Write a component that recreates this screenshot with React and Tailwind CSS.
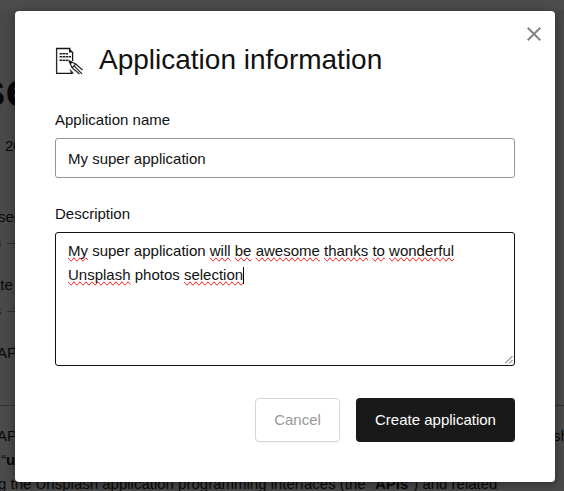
import React from 'react';

function Misspelled({ children }) {
  return <span className="[text-decoration-line:spelling-error]">{children}</span>;
}

function PageBehind() {
  return (
    <div className="h-[491px] w-[564px] overflow-hidden bg-[#4a4a4a] text-[15px] leading-6 whitespace-nowrap text-[#080808]">
      <div className="h-[10px] bg-[#4c4c4c]" />
      <div className="h-[396px] border-b border-[#313131] bg-[#494949]">
        <div className="h-[124px] pt-[50px]">
          <div className="-ml-[20px] text-[46px] leading-[60px] font-bold">se</div>
        </div>
        <div className="h-[71px] pl-[5px]">2020</div>
        <div className="-ml-[2px] h-[26px]">see</div>
        <div className="-ml-[5px] flex h-[42px] items-start gap-[5px] text-[13px] text-[#292929]">
          <span>s</span><span className="mt-[12px] h-px w-10 bg-[#2c2c2c]" />
        </div>
        <div className="-ml-[8px] h-[26px]">ate</div>
        <div className="-ml-[5px] flex h-[42px] items-start gap-[5px] text-[13px] text-[#292929]">
          <span>s</span><span className="mt-[12px] h-px w-10 bg-[#2c2c2c]" />
        </div>
        <div className="-ml-[3px]">API</div>
      </div>
      <div className="pt-[18px]">
        <div className="-ml-[3px] flex"><span className="w-[556px] shrink-0">API</span><span>sh</span></div>
        <div className="pl-px">“<b>u</b></div>
        <div className="-ml-[2px]">g the Unsplash application programming interfaces (the “<b>APIs</b>”) and related</div>
      </div>
    </div>
  );
}

function DocumentIcon() {
  return (
    <svg width="28" height="28" viewBox="0 0 28 28" fill="none">
      <path d="M2.5 1v26" stroke="#a9d3f2" strokeWidth="1" />
      <path d="M1.5 1v26" stroke="#3a2416" strokeWidth="1.1" />
      <path d="M1 1.5h14.5M1 26.4h16.5M17.6 5v9" stroke="#171717" strokeWidth="1.3" />
      <path d="M14 1l4.5 4.5h-4.5z" fill="#171717" />
      <path d="M4.5 6.7h8.5M4.5 9.7h12M4.5 13.2h9" stroke="#222" strokeWidth="1.4" strokeDasharray="3 .5 2 .5" />
      <path d="M14 13.7l3 7 7.5 6.3M14 13.7l6.8 3.3 6.7 6M17.2 20.6l3.6-3.6M19 18.8l8 8" stroke="#262220" strokeWidth="1.2" />
      <path d="M13.7 13.3l4 1.9-2.3 2.3z" fill="#111" />
      <path d="M14.5 21.5l4.5 5h-3z" fill="#252525" />
    </svg>
  );
}

export default function App() {
  return (
    <div className="relative h-[491px] w-[564px] overflow-hidden font-['Liberation_Sans',Arial,sans-serif] text-[#111]">
      <PageBehind />
      <div className="absolute top-[11px] left-[15px] h-[471px] w-[540px] rounded-[4px] bg-white px-10 text-[15px] leading-6 shadow-[0_2px_10px_rgba(0,0,0,0.4)]">
        <button className="absolute top-4 right-[14px]" aria-label="Close">
          <svg width="14" height="14" viewBox="0 0 14 14" stroke="#858585" strokeWidth="2">
            <path d="M.7 .7l12.6 12.6M13.3 .7L.7 13.3" />
          </svg>
        </button>
        <div className="flex h-[97px] items-start pt-[32px]">
          <div className="mt-1 w-11"><DocumentIcon /></div>
          <h1 className="text-[28px] leading-[34px]">Application information</h1>
        </div>
        <label className="block h-[30px]">Application name</label>
        <div className="h-10 rounded-[3px] border border-[#949494] px-3 py-[8px] leading-[24px]">My super application</div>
        <label className="mt-6 block h-[30px]">Description</label>
        <div className="relative h-[134px] rounded-[3px] border border-[#111] px-3 pt-[6px]">
          <div>
            <Misspelled>My</Misspelled> super application <Misspelled>will</Misspelled> <Misspelled>be</Misspelled> <Misspelled>awesome</Misspelled> <Misspelled>thanks</Misspelled> <Misspelled>to</Misspelled> <Misspelled>wonderful</Misspelled>
          </div>
          <div className="flex items-center whitespace-pre">
            <Misspelled>Unsplash</Misspelled> photos <Misspelled>selection</Misspelled><span className="h-[17px] w-px bg-black" />
          </div>
          <svg className="absolute right-px bottom-px" width="8" height="8" viewBox="0 0 8 8" stroke="#555">
            <path d="M0 7.5L7.5 0M4 7.5L7.5 4" />
          </svg>
        </div>
        <div className="mt-8 flex justify-end gap-4">
          <button className="h-11 w-[85px] rounded-[4px] border border-[#d5d5d5] text-[#999] shadow-[0_1px_1px_rgba(0,0,0,0.05)]">Cancel</button>
          <button className="h-11 w-[159px] rounded-[4px] bg-[#191919] text-white">Create application</button>
        </div>
      </div>
    </div>
  );
}
